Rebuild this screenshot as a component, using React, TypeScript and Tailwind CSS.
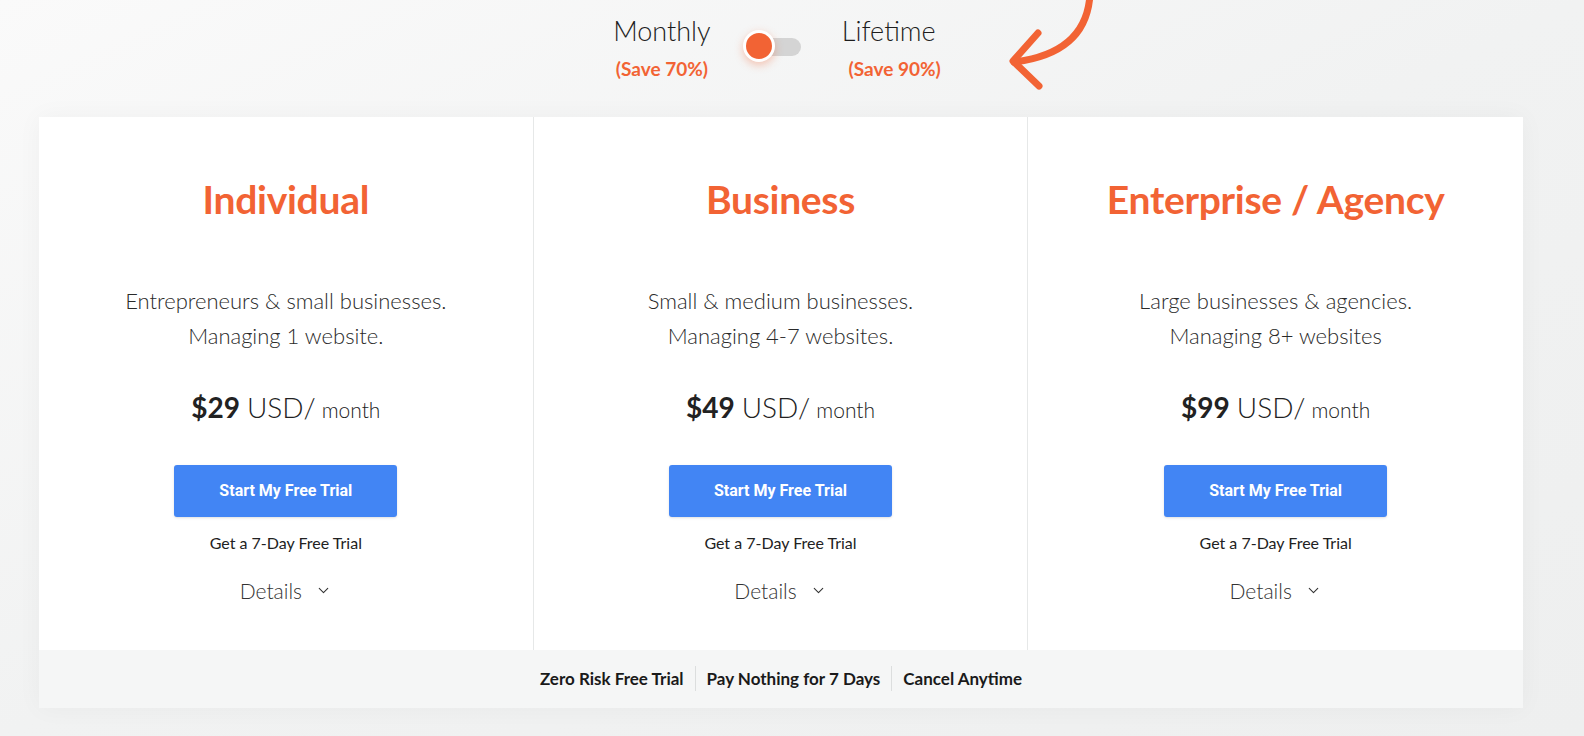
import { ChevronDown } from "lucide-react";

const plans = [
  {
    name: "Individual",
    lines: ["Entrepreneurs & small businesses.", "Managing 1 website."],
    price: "$29",
  },
  {
    name: "Business",
    lines: ["Small & medium businesses.", "Managing 4-7 websites."],
    price: "$49",
  },
  {
    name: "Enterprise / Agency",
    lines: ["Large businesses & agencies.", "Managing 8+ websites"],
    price: "$99",
  },
];

function CurvedArrow() {
  return (
    <svg width="110" height="100" viewBox="0 0 110 100" className="absolute left-[992px] top-0" fill="none">
      <path
        d="M98 -6 C 96 32, 72 56, 22 62"
        stroke="#f26334"
        strokeWidth="7"
        strokeLinecap="round"
      />
      <path
        d="M46 33 L 21 61 L 47 86"
        stroke="#f26334"
        strokeWidth="7"
        strokeLinecap="round"
        strokeLinejoin="round"
      />
    </svg>
  );
}

function PlanColumn({ plan, last }: { plan: (typeof plans)[number]; last: boolean }) {
  return (
    <div className={`flex flex-col items-center pt-[58px] pb-[43px] ${last ? "" : "border-r border-[#e6e8e8]"}`}>
      <h2 className="text-[39px] leading-[48px] font-bold text-[#f26334] tracking-[-0.3px]">{plan.name}</h2>
      <div className="mt-[60px] text-center text-[22px] leading-[35px] font-light text-[#2a2a2a]">
        {plan.lines.map((l) => (
          <p key={l}>{l}</p>
        ))}
      </div>
      <div className="mt-[33px] flex items-baseline text-[#222]">
        <span className="text-[28px] font-bold">{plan.price}</span>
        <span className="ml-[7px] text-[28px] font-light">USD/</span>
        <span className="ml-[6px] text-[21px] font-light">month</span>
      </div>
      <button className="mt-[37px] w-[223px] h-[52px] rounded-[3px] bg-[#4285f4] text-white text-[16px] font-bold font-['Roboto',sans-serif] shadow-sm">
        Start My Free Trial
      </button>
      <p className="mt-[14px] text-[16px] font-normal text-[#222]">Get a 7-Day Free Trial</p>
      <div className="mt-[20px] flex items-center gap-[13px] text-[21px] font-light text-[#333]">
        Details
        <ChevronDown className="w-[17px] h-[17px]" strokeWidth={1.5} />
      </div>
    </div>
  );
}

export default function App() {
  return (
    <div className="relative w-full h-[736px] overflow-hidden bg-gradient-to-br from-[#fafafa] via-[#f1f2f2] to-[#eeefef] font-['Lato','Noto_Sans',sans-serif]">
      <CurvedArrow />
      <div className="flex justify-center pt-[14px] h-[117px]">
        <div className="flex items-start ml-[-30px]">
          <div className="flex flex-col items-center">
            <span className="text-[27px] leading-[34px] font-light text-[#1d1d1d]">Monthly</span>
            <span className="mt-[7px] text-[19px] font-bold text-[#f26334]">(Save 70%)</span>
          </div>
          <div className="relative ml-[34px] mr-[36px] mt-[23px] w-[56px] h-[20px]">
            <div className="absolute left-[8px] right-0 top-[1px] h-[18px] rounded-full bg-[#d4d4d4]" />
            <div className="absolute left-[-2px] top-[-7px] w-[32px] h-[32px] rounded-full bg-[#f26334] border-[3px] border-white shadow-[0_3px_8px_rgba(242,99,52,0.35)]" />
          </div>
          <div className="flex flex-col items-center">
            <span className="text-[27px] leading-[34px] font-light text-[#1d1d1d]">Lifetime</span>
            <span className="mt-[7px] ml-[12px] text-[19px] font-bold text-[#f26334]">(Save 90%)</span>
          </div>
        </div>
      </div>
      <div className="ml-[39px] w-[1484px] bg-white shadow-[0_0_24px_rgba(0,0,0,0.04)]">
        <div className="grid grid-cols-3">
          {plans.map((p, i) => (
            <PlanColumn key={p.name} plan={p} last={i === plans.length - 1} />
          ))}
        </div>
        <div className="h-[58px] bg-[#f5f6f6] flex items-center justify-center text-[17px] font-bold text-[#1a1a1a]">
          <span className="pr-[11px]">Zero Risk Free Trial</span>
          <span className="w-px h-[25px] bg-[#dcdede]" />
          <span className="px-[11px]">Pay Nothing for 7 Days</span>
          <span className="w-px h-[25px] bg-[#dcdede]" />
          <span className="pl-[11px]">Cancel Anytime</span>
        </div>
      </div>
    </div>
  );
}
